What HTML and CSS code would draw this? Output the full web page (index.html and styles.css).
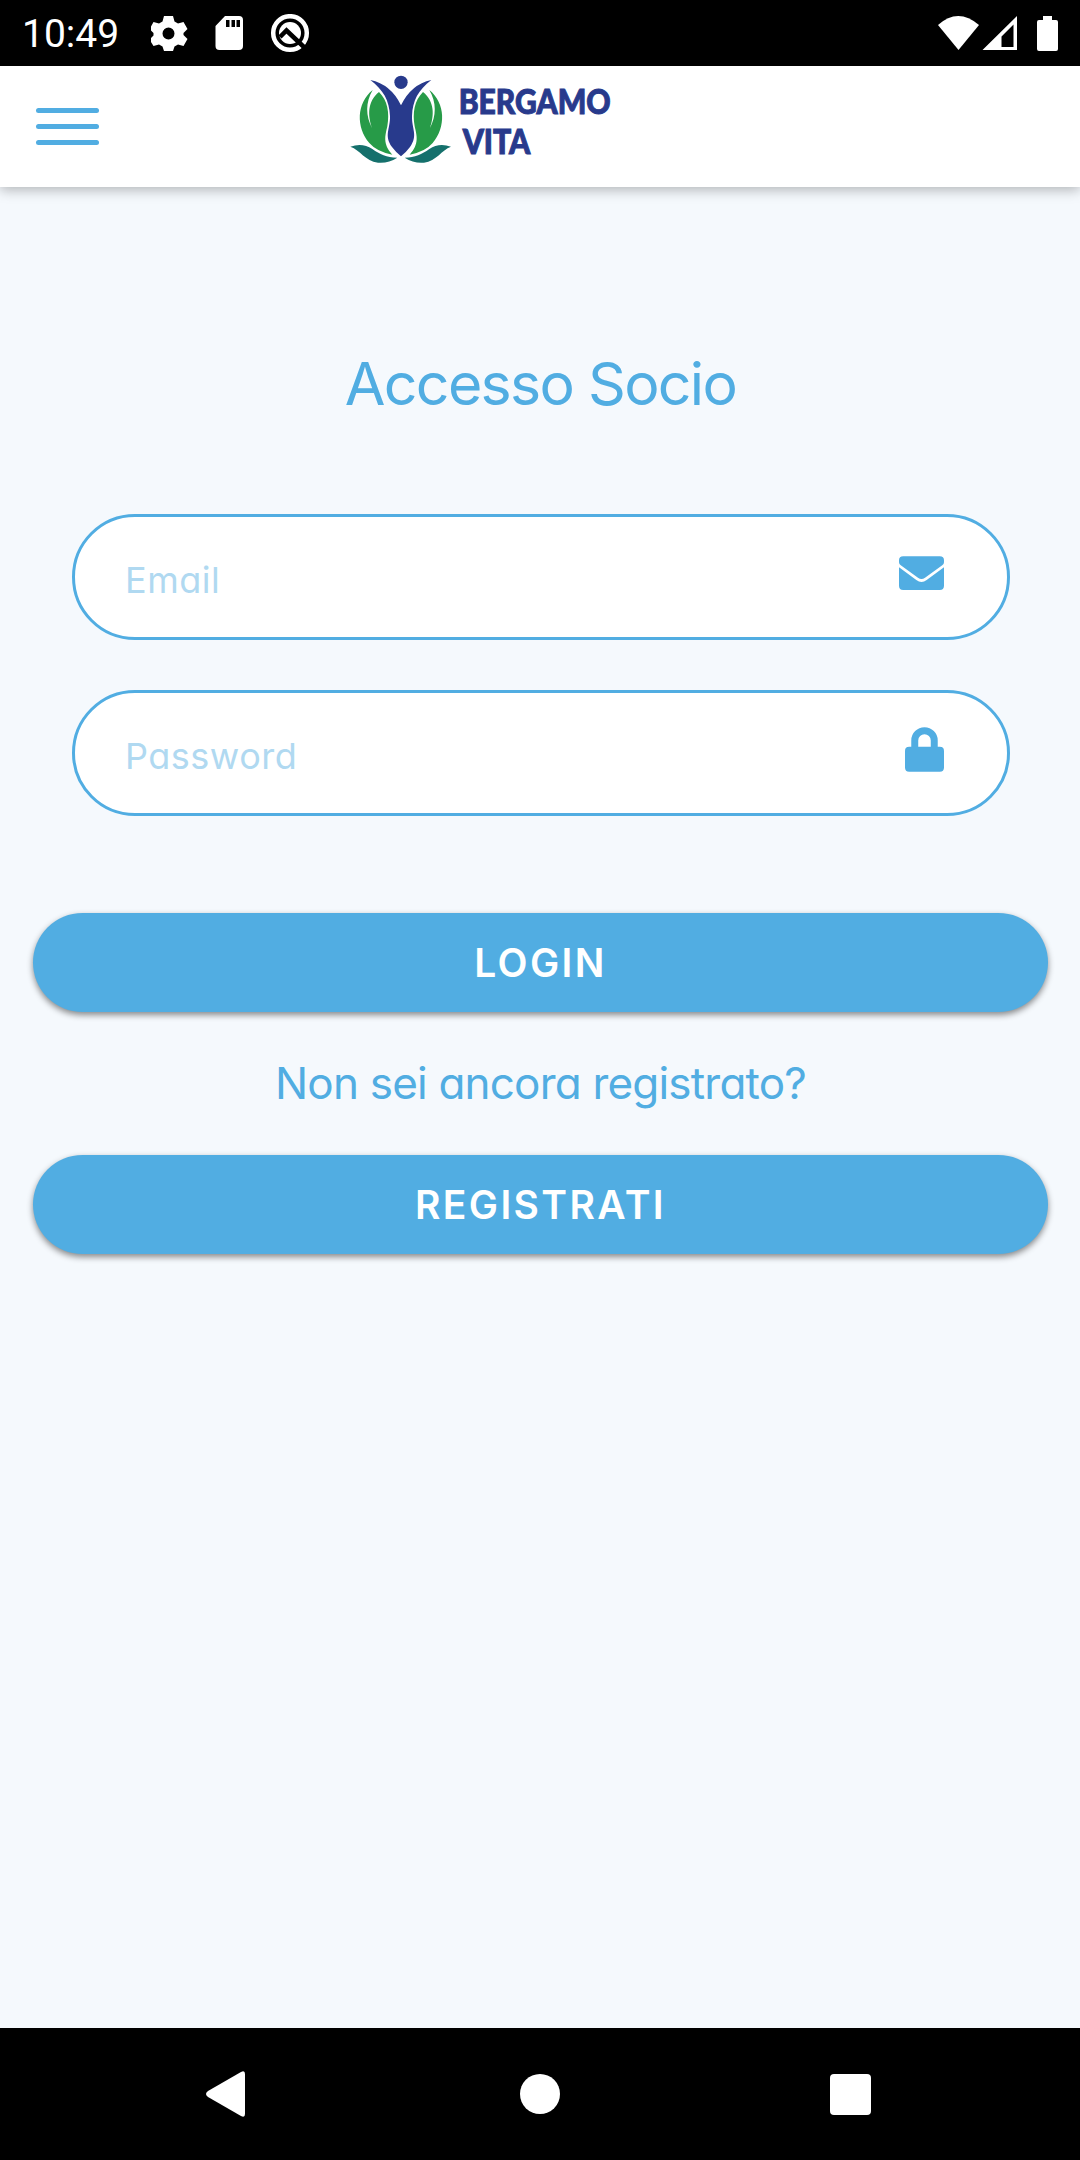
FILE: index.html
```html
<!DOCTYPE html>
<html lang="it">
<head>
  <meta charset="UTF-8">
  <meta name="viewport" content="width=device-width, initial-scale=1.0">
  <title>Bergamo Vita</title>
  <link rel="stylesheet" href="styles.css">
</head>
<body>
  <!-- Status bar -->
  <div class="status-bar">
    <span class="clock">10:49</span>
    <svg class="status-left" viewBox="0 0 160 40" width="160" height="40">
      <path fill="#fff" fill-rule="evenodd" d="M13 2h9l1.500 5.500 3.500 2 5.500-1.500 4 7-4 4v2l4 4-4 7-5.500-1.500-3.500 2-1.500 4.500h-9l-1.500-4.500-3.500-2-5.500 1.500-4-6.500 4-4v-2.500l-4-4 4-7 5.500 1.500 3.500-2zM17.500 13.500a6 6 0 1 0 0 12 6 6 0 1 0 0-12z"/>
      <path fill="#fff" fill-rule="evenodd" d="M74 2h14q4 0 4 4v26q0 4-4 4H68.500q-4 0-4-4V12zM75 6v7h3.500V6zM80.500 6v7H84V6zM85.500 6v7H89V6z"/>
      <circle cx="139" cy="19" r="16.800" fill="none" stroke="#fff" stroke-width="4.500"/>
      <circle cx="139" cy="19" r="11" fill="#fff"/>
      <path d="M129 23l6.500-6.500L155 35" fill="none" stroke="#000" stroke-width="4.500"/>
    </svg>
    <svg class="status-right" viewBox="0 0 122 40" width="122" height="40">
      <path fill="#fff" d="M0 11Q20-7 41 11L20.500 36z"/>
      <path fill="#fff" fill-rule="evenodd" d="M79 2v34H44.500zM75.500 10.500L63.500 22.500v10.500h12z"/>
      <path fill="#fff" d="M105 2h9v4h4q2 0 2 2v27q0 2-2 2h-17q-2 0-2-2V8q0-2 2-2h4z"/>
    </svg>
  </div>

  <!-- Header -->
  <header class="header">
    <button class="menu" aria-label="Menu">
      <span></span>
      <span></span>
      <span></span>
    </button>
    <svg class="logo" viewBox="30 24 783 270" width="261" height="90">
      <circle cx="183" cy="49" r="20" fill="#283a8c"/>
      <path fill="#283a8c" d="M91 42Q153 55 183 118Q213 55 274 42C235 72 218 103 216 150C215 190 235 208 210 243Q199 258 183 271Q167 258 156 243C131 208 151 190 150 150C148 103 130 72 91 42z"/>
      <path fill="#279b48" d="M98 72C49 112 48 184 88 231Q110 257 157 266C127 234 136 208 142 181C149 140 143 104 117 78C82 106 83 148 96 186C77 149 76 110 98 72z"/>
      <path fill="#279b48" d="M268 72C317 112 318 184 278 231Q256 257 209 266C239 234 230 208 224 181C217 140 223 104 249 78C284 106 283 148 270 186C289 149 290 110 268 72z"/>
      <path fill="#15706c" d="M31 242Q67 229 97 249C120 265 139 274 172 275Q144 293 114 290C75 285 61 252 31 242z"/>
      <path fill="#15706c" d="M333 242Q297 229 268 249C245 265 226 274 194 275Q222 293 252 290C290 285 304 252 333 242z"/>
      <text x="356" y="143" textLength="456" lengthAdjust="spacingAndGlyphs">BERGAMO</text>
      <text x="368" y="263" textLength="203" lengthAdjust="spacingAndGlyphs">VITA</text>
    </svg>
  </header>

  <!-- Login form -->
  <main class="content">
    <h1>Accesso Socio</h1>
    <form id="loginForm">
      <div class="field">
        <input type="email" class="email" name="email" placeholder="Email">
        <svg viewBox="0 0 512 384" width="45" height="34">
          <path d="M48 0H464Q512 0 512 48V70Q512 90 492 105L296 246Q256 275 216 246L20 105Q0 90 0 70V48Q0 0 48 0zM0 127L197 272Q256 314 315 272L512 127V336Q512 384 464 384H48Q0 384 0 336z"/>
        </svg>
      </div>
      <div class="field">
        <input type="password" class="password" name="password" placeholder="Password">
        <svg viewBox="0 0 448 512" width="39" height="45">
          <path fill-rule="evenodd" d="M72 224V152a152 152 0 0 1 304 0V224H400Q448 224 448 272V464Q448 512 400 512H48Q0 512 0 464V272Q0 224 48 224zM152 224H296V152a72 72 0 0 0-144 0z"/>
        </svg>
      </div>
      <button type="submit" class="btn login">LOGIN</button>
    </form>
    <p class="question">Non sei ancora registrato?</p>
    <button class="btn register">REGISTRATI</button>
  </main>

  <!-- Navigation bar -->
  <nav class="nav-bar">
    <svg class="back" viewBox="0 0 40 46" width="40" height="46">
      <path fill="#fff" d="M2 20L35 1Q39-1 39 3V43Q39 47 35 45L2 26Q-2 23 2 20z"/>
    </svg>
    <span class="home"></span>
    <span class="recent"></span>
  </nav>
</body>
</html>
```

FILE: styles.css
```css
* {
  box-sizing: border-box;
}
body {
  margin: 0;
  height: 2160px;
  display: flex;
  flex-direction: column;
  font-family: Inter, "Open Sans", sans-serif;
  font-feature-settings: "cv11";
  background-color: #f5f9fd;
  color: #51ade2;
}
button {
  border: none;
  font-family: inherit;
  font-feature-settings: inherit;
  cursor: pointer;
}

.status-bar {
  height: 66px;
  display: flex;
  align-items: flex-start;
  padding: 14px 20px 0 22px;
  background-color: #000;
  color: #fff;
}
.clock {
  width: 129px;
  font-family: Roboto, sans-serif;
  font-size: 39px;
  line-height: 41px;
}
.status-right {
  margin-left: auto;
}

.header {
  height: 121px;
  display: flex;
  align-items: flex-start;
  padding: 8px 0 0 36px;
  background-color: #fff;
  box-shadow: 0 3px 12px rgba(0, 0, 0, 0.28);
}
.menu {
  width: 63px;
  height: 37px;
  margin-top: 34px;
  padding: 0;
  display: flex;
  flex-direction: column;
  justify-content: space-between;
  background: none;
}
.menu span {
  height: 5px;
  border-radius: 3px;
  background-color: #51ade2;
}
.logo {
  margin-left: 251px;
  overflow: visible;
}
.logo text {
  font-family: Lato, sans-serif;
  font-size: 100px;
  font-weight: 900;
  fill: #283a8c;
  stroke: #283a8c;
  stroke-width: 3px;
}

.content {
  flex: 1;
  padding: 160px 32px 0 33px;
}
h1 {
  margin: 0;
  font-size: 59px;
  font-weight: 400;
  line-height: 74px;
  letter-spacing: -1.7px;
  text-align: center;
}
#loginForm {
  display: flex;
  flex-direction: column;
  margin-top: 93px;
}
.field {
  display: flex;
  align-items: flex-start;
  height: 126px;
  margin: 0 38px 50px 39px;
  padding: 0 63px 0 50px;
  border: 3px solid #51ade2;
  border-radius: 63px;
  background-color: #fff;
}
.field input {
  flex: 1;
  min-width: 0;
  height: 120px;
  padding: 5px 0 0;
  border: none;
  outline: none;
  background: none;
  font-family: inherit;
  font-feature-settings: inherit;
  font-size: 36px;
  font-weight: 400;
  letter-spacing: 0.5px;
}
.field input::placeholder {
  color: #b0d9f1;
}
.field svg {
  margin-top: 39px;
  fill: #51ade2;
}
.password + svg {
  margin-top: 34px;
}
.btn {
  width: 100%;
  height: 99px;
  border-radius: 50px;
  background-color: #51ade2;
  box-shadow: 0 3px 6px rgba(0, 0, 0, 0.45);
  color: #fff;
  font-size: 39px;
  font-weight: 600;
  letter-spacing: 2.4px;
}
.field .password + svg {
  margin-top: 34px;
}
.login {
  margin-top: 47px;
}
.question {
  margin: 43px 0 44px;
  font-size: 44px;
  font-weight: 400;
  line-height: 56px;
  letter-spacing: -0.8px;
  text-align: center;
}

.nav-bar {
  height: 132px;
  display: flex;
  align-items: center;
  padding: 0 209px 0 206px;
  justify-content: space-between;
  background-color: #000;
}
.home {
  width: 40px;
  height: 40px;
  margin-left: 4px;
  border-radius: 50%;
  background-color: #fff;
}
.recent {
  width: 41px;
  height: 41px;
  border-radius: 4px;
  background-color: #fff;
}
```
